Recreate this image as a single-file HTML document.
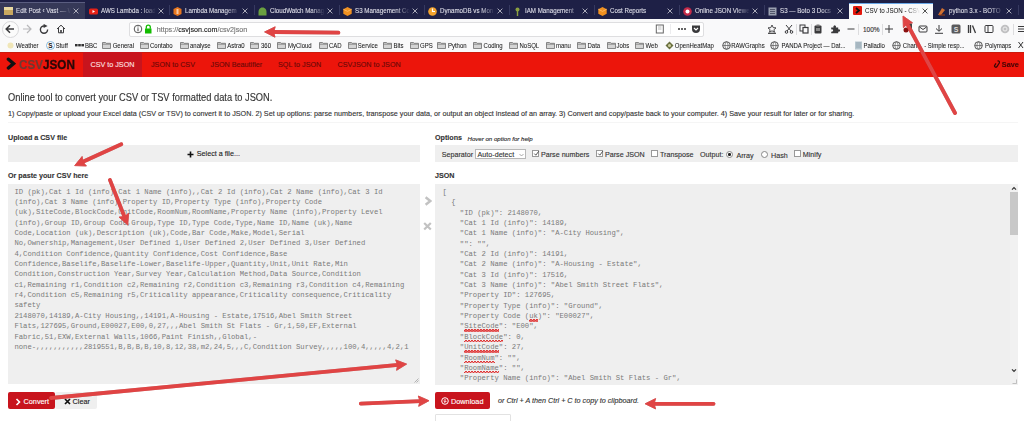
<!DOCTYPE html>
<html><head><meta charset="utf-8">
<style>
*{box-sizing:border-box;margin:0;padding:0}
html,body{width:1024px;height:421px;overflow:hidden;background:#fff;font-family:"Liberation Sans",sans-serif;position:relative;-webkit-text-stroke:.12px}
.a{position:absolute;white-space:nowrap}
#tabs{position:absolute;left:0;top:0;width:1024px;height:19px;background:#1e2046}
.tab{position:absolute;top:0;height:19px;color:#dedee8;font-size:6.2px;line-height:9px}
.tab.hov{background:#363958;box-shadow:inset 0 1px 0 #5a5d80;top:2px;height:17px}
.tab.hov .fav{top:4.6px}.tab.hov .t{top:3px}.tab.hov .x{top:5.8px}
.tab.act{background:#f9f9fa;color:#0c0c0d;top:2.5px;height:16.5px;box-shadow:inset 0 1px 0 #6aa8e8}
.tab.act .fav{top:3.8px}.tab.act .t{top:2.6px;-webkit-text-stroke:0}.tab.act .x{top:5px}
.tab .t{position:absolute;left:16px;top:4.9px;transform:scaleY(1.2);width:55px;overflow:hidden;white-space:nowrap;-webkit-text-stroke:.1px currentColor;-webkit-mask-image:linear-gradient(90deg,#000 75%,transparent)}
.tab .x{position:absolute;left:72.5px;top:8px;color:#c4c4d0}
.tab.act .x{color:#333}
.tab .fav{position:absolute;left:4px;top:6.6px}
.sep{position:absolute;top:5px;width:1px;height:10px;background:#363960}
#nav{position:absolute;left:0;top:19px;width:1024px;height:33px;background:#f9f9fa}
#url{position:absolute;left:129px;top:22px;width:575px;height:14.5px;background:#fff;border:1px solid #dedee0;border-radius:2px}
.ti{position:absolute}
.bm{position:absolute;top:41px}
.bi{position:absolute;top:0}
.bt{position:absolute;top:41.5px;font-size:6px;line-height:9px;color:#1a1a1a;white-space:nowrap;-webkit-text-stroke:.05px;transform:scaleY(1.25);transform-origin:50% 45%}
#red{position:absolute;left:0;top:52px;width:1024px;height:25px;background:#ec150b;box-shadow:inset 0 1px 0 #cc1a0c}
.rn{position:absolute;top:60px;height:9px;line-height:9px;font-size:7.2px;color:#6a0808;white-space:nowrap}
.sq{position:relative}.sq::after{content:"";position:absolute;left:0;right:0;top:7px;height:2.4px;background:linear-gradient(135deg,transparent 28%,#e03838 28%,#e03838 58%,transparent 58%) 0 0/3px 2.4px,linear-gradient(45deg,transparent 28%,#e03838 28%,#e03838 58%,transparent 58%) 1.5px 0/3px 2.4px}
.h{font-size:7.17px;line-height:9px;font-weight:bold;color:#333}
.mono{font-family:"Liberation Mono",monospace;font-size:7.23px;line-height:10.36px;color:#7a7a7a;white-space:pre;-webkit-text-stroke:0}
.opt{font-size:7.15px;color:#333;line-height:10px}
.cb{position:absolute;top:150px;width:7px;height:7px;border:1px solid #999;background:#fff}
</style></head><body>

<div id="tabs">
<div class="tab hov" style="left:0px;width:85px"><svg class="fav" width="9" height="9" viewBox="0 0 9 9"><rect x="0" y="0" width="9" height="8" fill="#c9a860"/><rect x="0" y="0" width="9" height="3" fill="#e8d8a0"/></svg><div class="t">Edit Post ‹ Vast — W</div><svg class="x" width="6" height="6" viewBox="0 0 6 6"><path d="M0.6 0.6L5.4 5.4M5.4 0.6L0.6 5.4" stroke="currentColor" stroke-width=".85"/></svg></div>
<div class="tab" style="left:85px;width:85px"><svg class="fav" width="9" height="9" viewBox="0 0 9 9"><rect x="0" y="1.5" width="9" height="6" rx="1.5" fill="#e62117"/><path d="M3.5 3 L6 4.5 L3.5 6Z" fill="#fff"/></svg><div class="t">AWS Lambda : load</div><svg class="x" width="6" height="6" viewBox="0 0 6 6"><path d="M0.6 0.6L5.4 5.4M5.4 0.6L0.6 5.4" stroke="currentColor" stroke-width=".85"/></svg></div>
<div class="tab" style="left:169px;width:85px"><svg class="fav" width="9" height="9" viewBox="0 0 9 9"><path d="M4.5 0 L8.5 2 V7 L4.5 9 L0.5 7 V2Z" fill="#e8761e"/><rect x="3.5" y="2" width="2" height="5" fill="#fff" opacity=".6"/></svg><div class="t">Lambda Managem</div><svg class="x" width="6" height="6" viewBox="0 0 6 6"><path d="M0.6 0.6L5.4 5.4M5.4 0.6L0.6 5.4" stroke="currentColor" stroke-width=".85"/></svg></div>
<div class="tab" style="left:254px;width:85px"><svg class="fav" width="9" height="9" viewBox="0 0 9 9"><path d="M4.5 0.5 C7.5 0.5 8.5 3 8.5 5 L8.5 8.5 L0.5 8.5 L0.5 5 C0.5 3 1.5 0.5 4.5 0.5Z" fill="#6aa040"/></svg><div class="t">CloudWatch Manag</div><svg class="x" width="6" height="6" viewBox="0 0 6 6"><path d="M0.6 0.6L5.4 5.4M5.4 0.6L0.6 5.4" stroke="currentColor" stroke-width=".85"/></svg></div>
<div class="tab" style="left:339px;width:85px"><svg class="fav" width="9" height="9" viewBox="0 0 9 9"><path d="M4.5 0 L8.7 2.2 V6.8 L4.5 9 L0.3 6.8 V2.2Z" fill="#f09020"/><path d="M0.3 2.2 L4.5 4.4 L8.7 2.2" fill="none" stroke="#ffc070" stroke-width=".8"/></svg><div class="t">S3 Management Co</div><svg class="x" width="6" height="6" viewBox="0 0 6 6"><path d="M0.6 0.6L5.4 5.4M5.4 0.6L0.6 5.4" stroke="currentColor" stroke-width=".85"/></svg></div>
<div class="tab" style="left:424px;width:85px"><svg class="fav" width="9" height="9" viewBox="0 0 9 9"><circle cx="4.5" cy="4.5" r="4.3" fill="#f2a22e"/><path d="M4.5 1.5 V4.5 H7" fill="none" stroke="#fff" stroke-width="1.2"/></svg><div class="t">DynamoDB vs Mon</div><svg class="x" width="6" height="6" viewBox="0 0 6 6"><path d="M0.6 0.6L5.4 5.4M5.4 0.6L0.6 5.4" stroke="currentColor" stroke-width=".85"/></svg></div>
<div class="tab" style="left:509px;width:85px"><svg class="fav" width="9" height="9" viewBox="0 0 9 9"><circle cx="4.5" cy="2.5" r="2" fill="#8aa040"/><rect x="3.8" y="4" width="1.4" height="5" fill="#8aa040"/></svg><div class="t">IAM Management</div><svg class="x" width="6" height="6" viewBox="0 0 6 6"><path d="M0.6 0.6L5.4 5.4M5.4 0.6L0.6 5.4" stroke="currentColor" stroke-width=".85"/></svg></div>
<div class="tab" style="left:594px;width:85px"><svg class="fav" width="9" height="9" viewBox="0 0 9 9"><path d="M4.5 0 L8.7 2.2 V6.8 L4.5 9 L0.3 6.8 V2.2Z" fill="#f09020"/><path d="M0.3 2.2 L4.5 4.4 L8.7 2.2" fill="none" stroke="#ffc070" stroke-width=".8"/></svg><div class="t">Cost Reports</div><svg class="x" width="6" height="6" viewBox="0 0 6 6"><path d="M0.6 0.6L5.4 5.4M5.4 0.6L0.6 5.4" stroke="currentColor" stroke-width=".85"/></svg></div>
<div class="tab" style="left:679px;width:85px"><svg class="fav" width="9" height="9" viewBox="0 0 9 9"><circle cx="4.5" cy="4.5" r="4.3" fill="#c42a48"/><circle cx="4.5" cy="4.5" r="2" fill="#fff"/></svg><div class="t">Online JSON Viewer</div><svg class="x" width="6" height="6" viewBox="0 0 6 6"><path d="M0.6 0.6L5.4 5.4M5.4 0.6L0.6 5.4" stroke="currentColor" stroke-width=".85"/></svg></div>
<div class="tab" style="left:764px;width:85px"><svg class="fav" width="9" height="9" viewBox="0 0 9 9"><rect x="0.5" y="0.5" width="8" height="8" fill="#9aa0b0"/><path d="M2 2.5H7M2 4.5H7M2 6.5H7" stroke="#40445a" stroke-width=".8"/></svg><div class="t">S3 — Boto 3 Docs</div><svg class="x" width="6" height="6" viewBox="0 0 6 6"><path d="M0.6 0.6L5.4 5.4M5.4 0.6L0.6 5.4" stroke="currentColor" stroke-width=".85"/></svg></div>
<div class="tab act" style="left:849px;width:84px"><svg class="fav" width="9" height="9" viewBox="0 0 9 9"><rect x="0" y="0" width="9" height="9" rx="1" fill="#e4170c"/><path d="M3 2 L6 4.5 L3 7" fill="none" stroke="#111" stroke-width="1.8"/></svg><div class="t">CSV to JSON - CSV</div><svg class="x" width="6" height="6" viewBox="0 0 6 6"><path d="M0.6 0.6L5.4 5.4M5.4 0.6L0.6 5.4" stroke="currentColor" stroke-width=".85"/></svg></div>
<div class="tab" style="left:933px;width:85px"><svg class="fav" width="9" height="9" viewBox="0 0 9 9"><path d="M1 8 L5 1 L8 3 L4 8Z" fill="#d07030"/><path d="M2 8 H8" stroke="#a04010" stroke-width="1"/></svg><div class="t">python 3.x - BOTO</div><svg class="x" width="6" height="6" viewBox="0 0 6 6"><path d="M0.6 0.6L5.4 5.4M5.4 0.6L0.6 5.4" stroke="currentColor" stroke-width=".85"/></svg></div>
<div class="sep" style="left:169px"></div>
<div class="sep" style="left:254px"></div>
<div class="sep" style="left:339px"></div>
<div class="sep" style="left:424px"></div>
<div class="sep" style="left:509px"></div>
<div class="sep" style="left:594px"></div>
<div class="sep" style="left:679px"></div>
<div class="sep" style="left:764px"></div>
<div class="sep" style="left:1018px"></div>
</div>

<div id="nav"></div>
  <div id="url"></div>
  <div class="a" style="left:156.7px;top:25.7px;font-size:7.15px;line-height:9px;color:#737373;transform:scaleY(1.12)">https://<span style="color:#1a1a1a">csvjson.com</span>/csv2json</div>
<div class="a" style="left:1.5px;top:20.5px;width:17px;height:17px;border-radius:50%;border:1px solid #d8d8da;background:#fbfbfb"></div>
<svg class="ti" style="left:5.2px;top:24.0px" width="10" height="10" viewBox="0 0 10 10"><path d="M1.3 5H9M5 1.2L1.2 5L5 8.8" stroke="#3a3a3c" fill="none" stroke-width="1.5"/></svg>
<svg class="ti" style="left:22.2px;top:24.0px" width="10" height="10" viewBox="0 0 10 10"><path d="M1 5H9M5 1L9 5L5 9" stroke="#b8b8ba" fill="none" stroke-width="1.2"/></svg>
<svg class="ti" style="left:38.8px;top:24.0px" width="10" height="10" viewBox="0 0 10 10"><path d="M8.6 5.6A3.6 3.6 0 1 1 5 2" stroke="#3a3a3c" fill="none" stroke-width="1.4"/><path d="M4.6 -0.1L8.6 2L4.6 4.1Z" fill="#3a3a3c"/></svg>
<svg class="ti" style="left:55.6px;top:24.0px" width="10" height="10" viewBox="0 0 10 10"><path d="M1 5L5 1.2L9 5M2.5 4V8.8H7.5V4" stroke="#3a3a3c" fill="none" stroke-width="1" stroke-width="1.3"/><rect x="4.2" y="6" width="1.6" height="2.8" fill="#3a3a3c"/></svg>
<svg class="ti" style="left:132.5px;top:24.2px" width="10" height="10" viewBox="0 0 10 10"><circle cx="5" cy="5" r="3.8" stroke="#555" fill="none" stroke-width="1"/><path d="M5 4.3V7.2M5 2.6V3.4" stroke="#555" stroke-width="1.1"/></svg>
<svg class="ti" style="left:143.2px;top:24.3px" width="10" height="10" viewBox="0 0 10 10"><rect x="2" y="4.5" width="6.5" height="5" fill="#12bc00"/><path d="M3.3 4.8V3.2A2 2 0 0 1 7.3 3.2V4.8" stroke="#12bc00" fill="none" stroke-width="1.3"/></svg>
<svg class="ti" style="left:655.3px;top:24.0px" width="10" height="10" viewBox="0 0 10 10"><rect x="1.3" y="1" width="7" height="8" stroke="#666" fill="none" stroke-width="1"/><path d="M3 3H6.5M3 5H6.5" stroke="#aaa" stroke-width=".8"/></svg>
<div class="a" style="left:670px;top:24px;width:1px;height:10px;background:#ececee"></div>
<svg class="ti" style="left:676.5px;top:24.2px" width="10" height="10" viewBox="0 0 10 10"><circle cx="2" cy="5" r="1" fill="#333"/><circle cx="5" cy="5" r="1" fill="#333"/><circle cx="8" cy="5" r="1" fill="#333"/></svg>
<svg class="ti" style="left:691.0px;top:24.0px" width="10" height="10" viewBox="0 0 10 10"><path d="M1 1.5H9V5A4 4 0 0 1 1 5Z" fill="#3a3a3c"/><path d="M3 4L5 6L7 4" stroke="#fff" fill="none" stroke-width="1.2"/></svg>
<svg class="ti" style="left:767.3px;top:24.3px" width="10" height="10" viewBox="0 0 10 10"><path d="M5 1L6.2 3.6L9 3.9L6.9 5.7L7.5 8.2L5 6.8L2.5 8.2L3.1 5.7L1 3.9L3.8 3.6Z" stroke="#3a3a3c" fill="none" stroke-width=".9"/><path d="M1 9.3H9" stroke="#3a3a3c" stroke-width="1.2"/></svg>
<svg class="ti" style="left:784.0px;top:24.3px" width="10" height="10" viewBox="0 0 10 10"><path d="M2 1L7 7M8 1L3 7" stroke="#3a3a3c" fill="none" stroke-width="1"/><circle cx="2.5" cy="8" r="1.3" stroke="#3a3a3c" fill="none" stroke-width="1"/><circle cx="7.5" cy="8" r="1.3" stroke="#3a3a3c" fill="none" stroke-width="1"/></svg>
<div class="a" style="left:796px;top:24px;width:1px;height:11px;background:#dcdcde"></div>
<svg class="ti" style="left:798.8px;top:24.3px" width="10" height="10" viewBox="0 0 10 10"><rect x="1" y="1" width="5" height="6" stroke="#3a3a3c" fill="none" stroke-width="1"/><rect x="4" y="3.5" width="5" height="5.5" fill="#f9f9fa" stroke="#3a3a3c" stroke-width="1.2"/></svg>
<div class="a" style="left:811px;top:24px;width:1px;height:11px;background:#dcdcde"></div>
<svg class="ti" style="left:813.0px;top:24.3px" width="10" height="10" viewBox="0 0 10 10"><rect x="1.5" y="1.5" width="7" height="8" rx="1" fill="#3a3a3c"/><rect x="3.5" y="0.5" width="3" height="2" fill="#777"/><rect x="3" y="4" width="4" height="3" fill="#888"/></svg>
<svg class="ti" style="left:829.5px;top:24.3px" width="10" height="10" viewBox="0 0 10 10"><path d="M1.2 3.4H3.6A1.3 1.3 0 1 1 5.8 3.4H8.2V5.4A1.3 1.3 0 1 1 8.2 7.6V9.2H1.2V7.4A1.2 1.2 0 1 0 1.2 5.4Z" fill="#3a3a3c"/></svg>
<svg class="ti" style="left:846.0px;top:24.3px" width="10" height="10" viewBox="0 0 10 10"><path d="M1.5 5H8.5" stroke="#3a3a3c" fill="none" stroke-width="1"/></svg>
<div class="a" style="left:858px;top:24px;width:1px;height:11px;background:#dcdcde"></div>
<div class="a" style="left:863px;top:25px;font-size:6.5px;line-height:9px;color:#333">100%</div>
<div class="a" style="left:882px;top:24px;width:1px;height:11px;background:#dcdcde"></div>
<svg class="ti" style="left:884.3px;top:24.3px" width="10" height="10" viewBox="0 0 10 10"><path d="M1 5H9M5 1V9" stroke="#3a3a3c" fill="none" stroke-width="1" stroke-width="1.3"/></svg>
<svg class="ti" style="left:903.0px;top:22.5px" width="10" height="10" viewBox="0 0 10 10"><rect x="4" y="0.5" width="5" height="7" fill="#444"/><circle cx="3" cy="7" r="2.5" fill="#8a1010"/></svg>
<svg class="ti" style="left:917.5px;top:24.3px" width="10" height="10" viewBox="0 0 10 10"><rect x="1" y="2" width="8" height="6" rx="1" stroke="#3a3a3c" fill="none" stroke-width="1" stroke-width="1"/><path d="M1.5 3L5 5.5L8.5 3" stroke="#3a3a3c" fill="none" stroke-width="1" stroke-width="1"/></svg>
<svg class="ti" style="left:934.0px;top:24.3px" width="10" height="10" viewBox="0 0 10 10"><path d="M5 1V7M2 4.5L5 7.3L8 4.5M1 9.3H9" stroke="#3a3a3c" fill="none" stroke-width="1"/></svg>
<svg class="ti" style="left:950.7px;top:24.3px" width="10" height="10" viewBox="0 0 10 10"><rect x="0.5" y="0.5" width="9" height="9" rx="1.5" fill="#5a5a5c"/><text x="5" y="7.8" font-size="7" font-weight="bold" fill="#ddd" text-anchor="middle" font-family="Liberation Sans">S</text></svg>
<svg class="ti" style="left:967.0px;top:24.3px" width="10" height="10" viewBox="0 0 10 10"><path d="M1.5 1V9M3.5 1V9M5.5 1.5L8.5 9" stroke="#3a3a3c" fill="none" stroke-width="1.3"/></svg>
<svg class="ti" style="left:983.8px;top:24.3px" width="10" height="10" viewBox="0 0 10 10"><rect x="1" y="1.5" width="8" height="7" rx="1" stroke="#3a3a3c" fill="none" stroke-width="1"/><path d="M4 1.5V8.5" stroke="#3a3a3c" fill="none" stroke-width="1"/></svg>
<svg class="ti" style="left:1000.2px;top:24.3px" width="10" height="10" viewBox="0 0 10 10"><circle cx="5" cy="5" r="4.3" fill="#c0c0c2"/><circle cx="5" cy="5" r="2" fill="none" stroke="#eee" stroke-width="1"/></svg>
<div class="a" style="left:1013px;top:24px;width:1px;height:11px;background:#dcdcde"></div>
<svg class="ti" style="left:1018.0px;top:24.3px" width="8" height="10" viewBox="0 0 8 10"><path d="M0 2.5H8M0 5H8M0 7.5H8" stroke="#3a3a3c" fill="none" stroke-width="1"/></svg>
<div class="bm" style="left:6px"><svg class="bi" width="9" height="9" viewBox="0 0 9 9"><circle cx="4.5" cy="4.5" r="3" fill="#f0e6b8"/></svg></div><div class="bt" style="left:16px">Weather</div>
<div class="bm" style="left:46px"><svg class="bi" width="9" height="9" viewBox="0 0 9 9"><circle cx="4.5" cy="4.5" r="4" fill="#fff" stroke="#7ab0d8" stroke-width=".9"/><text x="4.5" y="7" font-size="6.5" font-weight="bold" fill="#111" text-anchor="middle" font-family="Liberation Sans" style="-webkit-text-stroke:0">S</text></svg></div><div class="bt" style="left:55.7px">Stuff</div>
<div class="bm" style="left:75px"><svg class="bi" width="9" height="9" viewBox="0 0 9 9"><rect x="0" y="3" width="2.6" height="2.4" fill="#333"/><rect x="3.2" y="3" width="2.6" height="2.4" fill="#333"/><rect x="6.4" y="3" width="2.6" height="2.4" fill="#333"/></svg></div><div class="bt" style="left:85px">BBC</div>
<div class="bm" style="left:102px"><svg class="bi" width="9" height="8" viewBox="0 0 9 8"><path d="M0.5 1.5 H3.5 L4.2 2.3 H8.5 V7.5 H0.5Z" fill="#d4d4d4" stroke="#6e6e6e" stroke-width=".8"/><path d="M0.5 3.2 H8.5" stroke="#6e6e6e" stroke-width=".7"/></svg></div><div class="bt" style="left:112.7px">General</div>
<div class="bm" style="left:139.6px"><svg class="bi" width="9" height="8" viewBox="0 0 9 8"><path d="M0.5 1.5 H3.5 L4.2 2.3 H8.5 V7.5 H0.5Z" fill="#d4d4d4" stroke="#6e6e6e" stroke-width=".8"/><path d="M0.5 3.2 H8.5" stroke="#6e6e6e" stroke-width=".7"/></svg></div><div class="bt" style="left:150px">Contabo</div>
<div class="bm" style="left:179.7px"><svg class="bi" width="9" height="8" viewBox="0 0 9 8"><path d="M0.5 1.5 H3.5 L4.2 2.3 H8.5 V7.5 H0.5Z" fill="#d4d4d4" stroke="#6e6e6e" stroke-width=".8"/><path d="M0.5 3.2 H8.5" stroke="#6e6e6e" stroke-width=".7"/></svg></div><div class="bt" style="left:190px">analyse</div>
<div class="bm" style="left:216.6px"><svg class="bi" width="9" height="8" viewBox="0 0 9 8"><path d="M0.5 1.5 H3.5 L4.2 2.3 H8.5 V7.5 H0.5Z" fill="#d4d4d4" stroke="#6e6e6e" stroke-width=".8"/><path d="M0.5 3.2 H8.5" stroke="#6e6e6e" stroke-width=".7"/></svg></div><div class="bt" style="left:227.3px">Astra0</div>
<div class="bm" style="left:250.4px"><svg class="bi" width="9" height="8" viewBox="0 0 9 8"><path d="M0.5 1.5 H3.5 L4.2 2.3 H8.5 V7.5 H0.5Z" fill="#d4d4d4" stroke="#6e6e6e" stroke-width=".8"/><path d="M0.5 3.2 H8.5" stroke="#6e6e6e" stroke-width=".7"/></svg></div><div class="bt" style="left:261px">360</div>
<div class="bm" style="left:277px"><svg class="bi" width="9" height="8" viewBox="0 0 9 8"><path d="M0.5 1.5 H3.5 L4.2 2.3 H8.5 V7.5 H0.5Z" fill="#d4d4d4" stroke="#6e6e6e" stroke-width=".8"/><path d="M0.5 3.2 H8.5" stroke="#6e6e6e" stroke-width=".7"/></svg></div><div class="bt" style="left:288px">MyCloud</div>
<div class="bm" style="left:318.5px"><svg class="bi" width="9" height="8" viewBox="0 0 9 8"><path d="M0.5 1.5 H3.5 L4.2 2.3 H8.5 V7.5 H0.5Z" fill="#d4d4d4" stroke="#6e6e6e" stroke-width=".8"/><path d="M0.5 3.2 H8.5" stroke="#6e6e6e" stroke-width=".7"/></svg></div><div class="bt" style="left:329px">CAD</div>
<div class="bm" style="left:347.5px"><svg class="bi" width="9" height="8" viewBox="0 0 9 8"><path d="M0.5 1.5 H3.5 L4.2 2.3 H8.5 V7.5 H0.5Z" fill="#d4d4d4" stroke="#6e6e6e" stroke-width=".8"/><path d="M0.5 3.2 H8.5" stroke="#6e6e6e" stroke-width=".7"/></svg></div><div class="bt" style="left:357.8px">Service</div>
<div class="bm" style="left:383.2px"><svg class="bi" width="9" height="8" viewBox="0 0 9 8"><path d="M0.5 1.5 H3.5 L4.2 2.3 H8.5 V7.5 H0.5Z" fill="#d4d4d4" stroke="#6e6e6e" stroke-width=".8"/><path d="M0.5 3.2 H8.5" stroke="#6e6e6e" stroke-width=".7"/></svg></div><div class="bt" style="left:393.4px">Bits</div>
<div class="bm" style="left:409.8px"><svg class="bi" width="9" height="8" viewBox="0 0 9 8"><path d="M0.5 1.5 H3.5 L4.2 2.3 H8.5 V7.5 H0.5Z" fill="#d4d4d4" stroke="#6e6e6e" stroke-width=".8"/><path d="M0.5 3.2 H8.5" stroke="#6e6e6e" stroke-width=".7"/></svg></div><div class="bt" style="left:420px">GPS</div>
<div class="bm" style="left:437px"><svg class="bi" width="9" height="8" viewBox="0 0 9 8"><path d="M0.5 1.5 H3.5 L4.2 2.3 H8.5 V7.5 H0.5Z" fill="#d4d4d4" stroke="#6e6e6e" stroke-width=".8"/><path d="M0.5 3.2 H8.5" stroke="#6e6e6e" stroke-width=".7"/></svg></div><div class="bt" style="left:447.9px">Python</div>
<div class="bm" style="left:473.2px"><svg class="bi" width="9" height="8" viewBox="0 0 9 8"><path d="M0.5 1.5 H3.5 L4.2 2.3 H8.5 V7.5 H0.5Z" fill="#d4d4d4" stroke="#6e6e6e" stroke-width=".8"/><path d="M0.5 3.2 H8.5" stroke="#6e6e6e" stroke-width=".7"/></svg></div><div class="bt" style="left:483.6px">Coding</div>
<div class="bm" style="left:509.4px"><svg class="bi" width="9" height="8" viewBox="0 0 9 8"><path d="M0.5 1.5 H3.5 L4.2 2.3 H8.5 V7.5 H0.5Z" fill="#d4d4d4" stroke="#6e6e6e" stroke-width=".8"/><path d="M0.5 3.2 H8.5" stroke="#6e6e6e" stroke-width=".7"/></svg></div><div class="bt" style="left:519.5px">NoSQL</div>
<div class="bm" style="left:545.5px"><svg class="bi" width="9" height="8" viewBox="0 0 9 8"><path d="M0.5 1.5 H3.5 L4.2 2.3 H8.5 V7.5 H0.5Z" fill="#d4d4d4" stroke="#6e6e6e" stroke-width=".8"/><path d="M0.5 3.2 H8.5" stroke="#6e6e6e" stroke-width=".7"/></svg></div><div class="bt" style="left:555.9px">manu</div>
<div class="bm" style="left:577.3px"><svg class="bi" width="9" height="8" viewBox="0 0 9 8"><path d="M0.5 1.5 H3.5 L4.2 2.3 H8.5 V7.5 H0.5Z" fill="#d4d4d4" stroke="#6e6e6e" stroke-width=".8"/><path d="M0.5 3.2 H8.5" stroke="#6e6e6e" stroke-width=".7"/></svg></div><div class="bt" style="left:587.5px">Data</div>
<div class="bm" style="left:606.8px"><svg class="bi" width="9" height="8" viewBox="0 0 9 8"><path d="M0.5 1.5 H3.5 L4.2 2.3 H8.5 V7.5 H0.5Z" fill="#d4d4d4" stroke="#6e6e6e" stroke-width=".8"/><path d="M0.5 3.2 H8.5" stroke="#6e6e6e" stroke-width=".7"/></svg></div><div class="bt" style="left:616.6px">Jobs</div>
<div class="bm" style="left:635px"><svg class="bi" width="9" height="8" viewBox="0 0 9 8"><path d="M0.5 1.5 H3.5 L4.2 2.3 H8.5 V7.5 H0.5Z" fill="#d4d4d4" stroke="#6e6e6e" stroke-width=".8"/><path d="M0.5 3.2 H8.5" stroke="#6e6e6e" stroke-width=".7"/></svg></div><div class="bt" style="left:645.5px">Web</div>
<div class="bm" style="left:665px"><svg class="bi" width="9" height="9" viewBox="0 0 9 9"><path d="M4.5 0.5 L8.5 4.5 L4.5 8.5 L0.5 4.5Z" fill="#6a7040"/><circle cx="4.5" cy="4.5" r="1.5" fill="#cfd0a0"/></svg></div><div class="bt" style="left:674.8px">OpenHeatMap</div>
<div class="bm" style="left:721.5px"><svg class="bi" width="9" height="9" viewBox="0 0 9 9"><circle cx="4.5" cy="4.5" r="3.8" fill="none" stroke="#555" stroke-width="1"/><path d="M0.7 4.5H8.3M4.5 0.7C2.5 2.5 2.5 6.5 4.5 8.3M4.5 0.7C6.5 2.5 6.5 6.5 4.5 8.3" fill="none" stroke="#555" stroke-width=".7"/></svg></div><div class="bt" style="left:731.25px">RAWGraphs</div>
<div class="bm" style="left:770.3px"><svg class="bi" width="9" height="9" viewBox="0 0 9 9"><circle cx="4.5" cy="4.5" r="3.8" fill="none" stroke="#555" stroke-width="1"/><path d="M0.7 4.5H8.3M4.5 0.7C2.5 2.5 2.5 6.5 4.5 8.3M4.5 0.7C6.5 2.5 6.5 6.5 4.5 8.3" fill="none" stroke="#555" stroke-width=".7"/></svg></div><div class="bt" style="left:781.6px">PANDA Project — Dat...</div>
<div class="bm" style="left:853.6px"><svg class="bi" width="9" height="9" viewBox="0 0 9 9"><rect x="1" y="0.5" width="7" height="8" fill="#b8c8d0"/><path d="M2 2H7M2 4H7M2 6H7" stroke="#8898a8" stroke-width=".7"/></svg></div><div class="bt" style="left:863.5px">Palladio</div>
<div class="bm" style="left:891.5px"><svg class="bi" width="9" height="9" viewBox="0 0 9 9"><circle cx="4.5" cy="4.5" r="3.8" fill="none" stroke="#555" stroke-width="1"/><path d="M0.7 4.5H8.3M4.5 0.7C2.5 2.5 2.5 6.5 4.5 8.3M4.5 0.7C6.5 2.5 6.5 6.5 4.5 8.3" fill="none" stroke="#555" stroke-width=".7"/></svg></div><div class="bt" style="left:902.8px">Chart... - Simple resp...</div>
<div class="bm" style="left:974px"><svg class="bi" width="9" height="9" viewBox="0 0 9 9"><circle cx="4.5" cy="4.5" r="3.8" fill="none" stroke="#555" stroke-width="1"/><path d="M0.7 4.5H8.3M4.5 0.7C2.5 2.5 2.5 6.5 4.5 8.3M4.5 0.7C6.5 2.5 6.5 6.5 4.5 8.3" fill="none" stroke="#555" stroke-width=".7"/></svg></div><div class="bt" style="left:985px">Polymaps</div>
  <svg class="a" style="left:1018px;top:41px" width="6" height="8" viewBox="0 0 6 8"><path d="M0.5 1L5 7M5 1L0.5 7" stroke="#333" stroke-width="1"/></svg>


<div id="red"></div>
<svg class="a" style="left:6px;top:57.2px" width="10" height="14" viewBox="0 0 10 14"><path d="M2.4 2.2L7.6 6.6L2.4 11" fill="none" stroke="#111" stroke-width="3.4" stroke-linecap="round" stroke-linejoin="miter"/></svg>
<div class="a" style="left:19px;top:56.6px;line-height:16px;font-size:11.7px;font-weight:bold;transform:scaleY(1.12);transform-origin:0 50%"><span style="color:#6e3a32">CSV</span><span style="color:#2a0808;-webkit-text-stroke:.3px #2a0808">JSON</span></div>
<div class="a" style="left:83px;top:52px;width:59px;height:25px;background:#c8141d"></div>
<div class="rn" style="left:90.5px;color:#ffe0e0">CSV to JSON</div>
<div class="rn" style="left:151px">JSON to CSV</div>
<div class="rn" style="left:210.6px">JSON Beautifier</div>
<div class="rn" style="left:278px">SQL to JSON</div>
<div class="rn" style="left:337.6px">CSVJSON to JSON</div>
<svg class="a" style="left:992.5px;top:59.5px" width="7" height="9" viewBox="0 0 7 9"><path d="M4.5 1.2A1.3 1.3 0 0 1 6.3 3L3.8 6.8A1.3 1.3 0 0 1 1.6 5.5L3 3.3" fill="none" stroke="#3a0808" stroke-width="1.3"/></svg>
<div class="rn" style="left:1001.8px;top:59.8px;font-size:7.3px;font-weight:bold;color:#4a0606;transform:scaleY(1.1)">Save</div>

<div class="a" style="left:8px;top:93.3px;font-size:9.3px;line-height:11px;color:#333;transform:scaleY(1.1);transform-origin:0 55%">Online tool to convert your CSV or TSV formatted data to JSON.</div>
<div class="a" style="left:8px;top:108.7px;font-size:7.23px;line-height:9px;color:#333">1) Copy/paste or upload your Excel data (CSV or TSV) to convert it to JSON. 2) Set up options: parse numbers, transpose your data, or output an object instead of an array. 3) Convert and copy/paste back to your computer. 4) Save your result for later or for sharing.</div>
<div class="a" style="left:8px;top:121.5px;width:1010px;height:1px;background:#f5f5f5"></div>

<div class="a h" style="left:8px;top:133.5px">Upload a CSV file</div>
<div class="a" style="left:8px;top:145px;width:412px;height:17px;background:#efefef"></div>
<svg class="a" style="left:187px;top:150.5px" width="7" height="7" viewBox="0 0 7 7"><path d="M3.5 0.5V6.5M0.5 3.5H6.5" stroke="#111" stroke-width="1.6"/></svg>
<div class="a" style="left:196.8px;top:149px;font-size:7.2px;line-height:9px;color:#222">Select a file...</div>
<div class="a h" style="left:8px;top:171.5px">Or paste your CSV here</div>
<div class="a" style="left:8px;top:184px;width:412px;height:200px;background:#efefef"></div>
<div class="a mono" style="left:14.4px;top:186.5px">ID (pk),Cat 1 Id (info),Cat 1 Name (info),,Cat 2 Id (info),Cat 2 Name (info),Cat 3 Id
(info),Cat 3 Name (info),Property ID,Property Type (info),Property Code
(uk),SiteCode,BlockCode,UnitCode,RoomNum,RoomName,Property Name (info),Property Level
(info),Group ID,Group Code,Group,Type ID,Type Code,Type,Name ID,Name (uk),Name
Code,Location (uk),Description (uk),Code,Bar Code,Make,Model,Serial
No,Ownership,Management,User Defined 1,User Defined 2,User Defined 3,User Defined
4,Condition Confidence,Quantity Confidence,Cost Confidence,Base
Confidence,Baselife,Baselife-Lower,Baselife-Upper,Quantity,Unit,Unit Rate,Min
Condition,Construction Year,Survey Year,Calculation Method,Data Source,Condition
c1,Remaining r1,Condition c2,Remaining r2,Condition c3,Remaining r3,Condition c4,Remaining
r4,Condition c5,Remaining r5,Criticality appearance,Criticality consequence,Criticality
safety
2148070,14189,A-City Housing,,14191,A-Housing - Estate,17516,Abel Smith Street
Flats,127695,Ground,E00027,E00,0,27,,,Abel Smith St Flats - Gr,1,50,EF,External
Fabric,51,EXW,External Walls,1066,Paint Finish,,Global,-
none-,,,,,,,,,,,2819551,B,B,B,B,10,8,12,38,m2,24,5,,,C,Condition Survey,,,,,100,4,,,,,4,2,1</div>
<svg class="a" style="left:414px;top:378px" width="5" height="5" viewBox="0 0 5 5"><path d="M4.5 0.5L0.5 4.5M4.5 2.5L2.5 4.5" stroke="#999" stroke-width=".7"/></svg>

<svg class="a" style="left:424px;top:196.3px" width="8" height="10" viewBox="0 0 8 10"><path d="M1.6 1.3L6.3 5L1.6 8.7" fill="none" stroke="#c2c2c2" stroke-width="2.4"/></svg>
<svg class="a" style="left:423px;top:222.3px" width="9" height="8.5" viewBox="0 0 9 8.5"><path d="M1.2 1L7.8 7.5M7.8 1L1.2 7.5" fill="none" stroke="#c2c2c2" stroke-width="2.2"/></svg>

<div class="a h" style="left:435px;top:133.5px">Options</div>
<div class="a" style="left:467.5px;top:133.5px;font-size:6.1px;line-height:9px;font-style:italic;color:#222">Hover on option for help</div>
<div class="a" style="left:435px;top:145px;width:583px;height:17px;background:#efefef"></div>
<div class="a opt" style="left:441.8px;top:150.3px">Separator</div>
<div class="a" style="left:475px;top:149.4px;width:51px;height:10px;background:#fff;border:1px solid #b8b8b8"></div>
<div class="a opt" style="left:477.6px;top:150.3px">Auto-detect</div>
<svg class="a" style="left:519px;top:153px" width="5" height="4" viewBox="0 0 5 4"><path d="M0.5 1L2.5 3L4.5 1" fill="none" stroke="#888" stroke-width=".7"/></svg>
<div class="cb" style="left:532px"><svg width="7" height="7" viewBox="0 0 7 7" style="position:absolute;left:-0.5px;top:-1px"><path d="M1.3 3.6L2.8 5.2L5.8 1.2" fill="none" stroke="#444" stroke-width=".9"/></svg></div>
<div class="a opt" style="left:541px;top:150.3px">Parse numbers</div>
<div class="cb" style="left:596px"><svg width="7" height="7" viewBox="0 0 7 7" style="position:absolute;left:-0.5px;top:-1px"><path d="M1.3 3.6L2.8 5.2L5.8 1.2" fill="none" stroke="#444" stroke-width=".9"/></svg></div>
<div class="a opt" style="left:605px;top:150.3px">Parse JSON</div>
<div class="cb" style="left:651px"></div>
<div class="a opt" style="left:660px;top:150.3px">Transpose</div>
<div class="a opt" style="left:700px;top:150.3px">Output:</div>
<div class="a" style="left:726px;top:151px;width:7px;height:7px;border-radius:50%;border:1px solid #888;background:#fff"><div style="position:absolute;left:1.3px;top:1.3px;width:2.5px;height:2.5px;border-radius:50%;background:#222"></div></div>
<div class="a opt" style="left:736.4px;top:150.8px">Array</div>
<div class="a" style="left:761px;top:151px;width:7px;height:7px;border-radius:50%;border:1px solid #888;background:#fff"></div>
<div class="a opt" style="left:771px;top:150.8px">Hash</div>
<div class="cb" style="left:794px"></div>
<div class="a opt" style="left:802.8px;top:150.3px">Minify</div>

<div class="a h" style="left:435px;top:171.5px">JSON</div>
<div class="a" style="left:435px;top:184px;width:583px;height:200.5px;background:#efefef"></div>
<div class="a mono" style="left:442.5px;top:186.8px">[
  {
    "ID (pk)": 2148070,
    "Cat 1 Id (info)": 14189,
    "Cat 1 Name (info)": "A-City Housing",
    "": "",
    "Cat 2 Id (info)": 14191,
    "Cat 2 Name (info)": "A-Housing - Estate",
    "Cat 3 Id (info)": 17516,
    "Cat 3 Name (info)": "Abel Smith Street Flats",
    "Property ID": 127695,
    "Property Type (info)": "Ground",
    "Property Code (<span class="sq">uk</span>)": "E00027",
    "<span class="sq">SiteCode</span>": "E00",
    "<span class="sq">BlockCode</span>": 0,
    "<span class="sq">UnitCode</span>": 27,
    "<span class="sq">RoomNum</span>": "",
    "<span class="sq">RoomName</span>": "",
    "Property Name (info)": "Abel Smith St Flats - Gr",</div>
<div class="a" style="left:1009.5px;top:184px;width:8.5px;height:200.5px;background:#f1f1f1"></div>
<svg class="a" style="left:1011px;top:186px" width="6" height="5" viewBox="0 0 6 5"><path d="M1 3.7L3 1.6L5 3.7" fill="none" stroke="#333" stroke-width="1.2"/></svg>
<div class="a" style="left:1010px;top:192px;width:7.5px;height:42.5px;background:#c8c8c8"></div>
<svg class="a" style="left:1011px;top:368px" width="6" height="5" viewBox="0 0 6 5"><path d="M1 1.3L3 3.4L5 1.3" fill="none" stroke="#333" stroke-width="1.2"/></svg>
<svg class="a" style="left:1012px;top:379px" width="5" height="5" viewBox="0 0 5 5"><path d="M4.5 0.5V4.5H0.5" fill="none" stroke="#aaa" stroke-width=".7"/></svg>

<div class="a" style="left:8px;top:391.8px;width:47px;height:17px;background:#c8141d;border-radius:2px"></div>
<svg class="a" style="left:15px;top:397.5px" width="6" height="8" viewBox="0 0 6 8"><path d="M1.5 1L4.5 4L1.5 7" fill="none" stroke="#fff" stroke-width="1.6"/></svg>
<div class="a" style="left:23.5px;top:396.6px;font-size:7.3px;line-height:9px;color:#fff">Convert</div>
<div class="a" style="left:55px;top:391.8px;width:42px;height:17px;background:#efefef;border-radius:2px"></div>
<svg class="a" style="left:64px;top:397.8px" width="7" height="7" viewBox="0 0 7 7"><path d="M1 1L6 6M6 1L1 6" fill="none" stroke="#111" stroke-width="1.7"/></svg>
<div class="a" style="left:72.5px;top:396.6px;font-size:7.3px;line-height:9px;color:#222">Clear</div>

<div class="a" style="left:435.3px;top:391.8px;width:54.7px;height:17px;background:#c8141d;border-radius:2px"></div>
<svg class="a" style="left:441px;top:397px" width="8" height="8" viewBox="0 0 8 8"><circle cx="4" cy="4" r="3.3" fill="none" stroke="#fff" stroke-width="1"/><path d="M4 2V5.2M2.6 4L4 5.4L5.4 4" fill="none" stroke="#fff" stroke-width=".9"/></svg>
<div class="a" style="left:451px;top:396.6px;font-size:7.3px;line-height:9px;color:#fff">Download</div>
<div class="a" style="left:498px;top:395.6px;font-size:7.2px;line-height:9px;font-style:italic;color:#333">or Ctrl + A then Ctrl + C to copy to clipboard.</div>
<div class="a" style="left:435px;top:413.6px;width:76px;height:10px;background:#fff;border:1px solid #e2e2e2;border-radius:1px"></div>

<!--ARROWS--><svg class="a" style="left:0;top:0;filter:drop-shadow(0 .6px .5px rgba(90,20,20,.35))" width="1024" height="421" viewBox="0 0 1024 421"><path d="M338.4 32.7L273.1 32.0" stroke="#e04444" stroke-width="3.8" stroke-linecap="round"/><path d="M264.6 31.9L275.2 26.8L273.6 32.0L275.0 37.2Z" fill="#e04444" stroke="#e04444" stroke-width="0.8" stroke-linejoin="round"/><path d="M955.0 113.0L907.0 23.5" stroke="#e04444" stroke-width="3.8" stroke-linecap="round"/><path d="M903.0 16.0L912.5 22.8L907.3 23.9L903.4 27.7Z" fill="#e04444" stroke="#e04444" stroke-width="0.8" stroke-linejoin="round"/><path d="M121.3 144.3L82.4 162.1" stroke="#e04444" stroke-width="3.8" stroke-linecap="round"/><path d="M74.7 165.6L82.1 156.5L82.9 161.9L86.4 166.0Z" fill="#e04444" stroke="#e04444" stroke-width="0.8" stroke-linejoin="round"/><path d="M109.9 179.9L124.6 217.1" stroke="#e04444" stroke-width="3.8" stroke-linecap="round"/><path d="M127.7 225.0L119.0 217.1L124.4 216.6L128.7 213.3Z" fill="#e04444" stroke="#e04444" stroke-width="0.8" stroke-linejoin="round"/><path d="M51.0 398.0L398.1 364.9" stroke="#e04444" stroke-width="3.8" stroke-linecap="round"/><path d="M406.6 364.1L396.6 370.3L397.6 365.0L395.7 359.9Z" fill="#e04444" stroke="#e04444" stroke-width="0.8" stroke-linejoin="round"/><path d="M360.8 403.6L420.5 401.1" stroke="#e04444" stroke-width="3.8" stroke-linecap="round"/><path d="M429.0 400.7L418.7 406.3L420.0 401.1L418.3 396.0Z" fill="#e04444" stroke="#e04444" stroke-width="0.8" stroke-linejoin="round"/><path d="M713.5 403.8L653.6 403.8" stroke="#e04444" stroke-width="3.8" stroke-linecap="round"/><path d="M645.1 403.8L655.6 398.6L654.1 403.8L655.6 408.9Z" fill="#e04444" stroke="#e04444" stroke-width="0.8" stroke-linejoin="round"/></svg>
<!--/ARROWS-->
</body></html>
